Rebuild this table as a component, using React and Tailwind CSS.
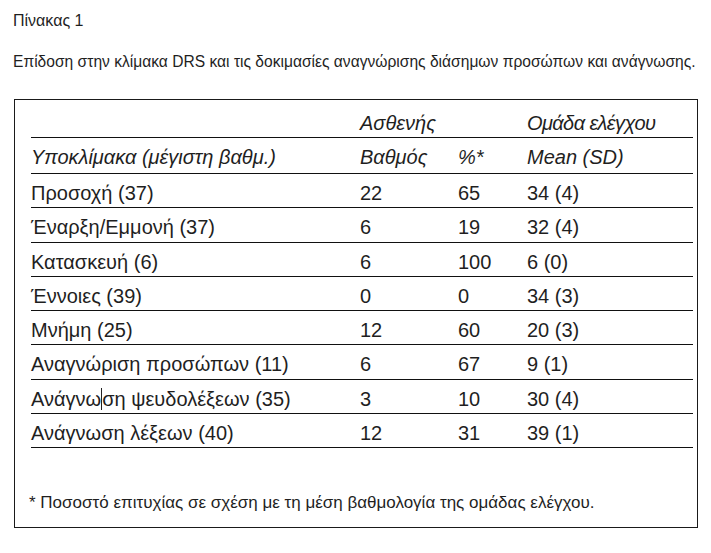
const rows = [
  { label: "Προσοχή (37)", score: "22", pct: "65", ctrl: "34 (4)" },
  { label: "Έναρξη/Εμμονή (37)", score: "6", pct: "19", ctrl: "32 (4)" },
  { label: "Κατασκευή (6)", score: "6", pct: "100", ctrl: "6 (0)" },
  { label: "Έννοιες (39)", score: "0", pct: "0", ctrl: "34 (3)" },
  { label: "Μνήμη (25)", score: "12", pct: "60", ctrl: "20 (3)" },
  { label: "Αναγνώριση προσώπων (11)", score: "6", pct: "67", ctrl: "9 (1)" },
  { label: "caret", score: "3", pct: "10", ctrl: "30 (4)" },
  { label: "Ανάγνωση λέξεων (40)", score: "12", pct: "31", ctrl: "39 (1)" },
];

const cols = "grid grid-cols-[329px_98px_69px_165px]";

const Label = ({ text }) => {
  if (text !== "caret") return text;
  // the screenshot has a text cursor stuck inside this word
  return (
    <>
      Ανάγνω
      <span className="inline-block w-px h-[22px] bg-[#222] align-[-4px]" />
      ση ψευδολέξεων (35)
    </>
  );
};

export default function App() {
  return (
    <div className="w-[711px] h-[553px] bg-white pt-[9px] pl-[13px] text-[#1f1f1f] font-['Liberation_Sans',Arial,sans-serif]">
      <p className="text-[16px] leading-6">Πίνακας 1</p>
      <p className="mt-[17px] text-[15.6px] leading-6">
        Επίδοση στην κλίμακα DRS και τις δοκιμασίες αναγνώρισης διάσημων προσώπων και ανάγνωσης.
      </p>

      <div className="ml-px mt-[25px] w-[684px] h-[429px] border border-[#1a1a1a] pl-4 pr-1 flex flex-col">
        <div className={`${cols} h-[38px] items-end border-b border-[#111] text-[20px] leading-[28px] italic`}>
          <span />
          <span className="col-span-2">Ασθενής</span>
          <span className="tracking-[-0.03em]">Ομάδα ελέγχου</span>
        </div>
        <div className={`${cols} h-[36px] items-center pt-[2px] border-b border-[#111] text-[20px] italic`}>
          <span>Υποκλίμακα (μέγιστη βαθμ.)</span>
          <span>Βαθμός</span>
          <span>%*</span>
          <span>Mean (SD)</span>
        </div>
        {rows.map((r, i) => (
          <div
            key={i}
            className={`${cols} h-[34.25px] items-center pt-[4px] border-b border-[#111] text-[20px]`}
          >
            <span className="whitespace-nowrap">
              <Label text={r.label} />
            </span>
            <span>{r.score}</span>
            <span>{r.pct}</span>
            <span>{r.ctrl}</span>
          </div>
        ))}

        <p className="mt-[43px] -ml-[2px] text-[17px] leading-6">
          * Ποσοστό επιτυχίας σε σχέση με τη μέση βαθμολογία της ομάδας ελέγχου.
        </p>
      </div>
    </div>
  );
}
